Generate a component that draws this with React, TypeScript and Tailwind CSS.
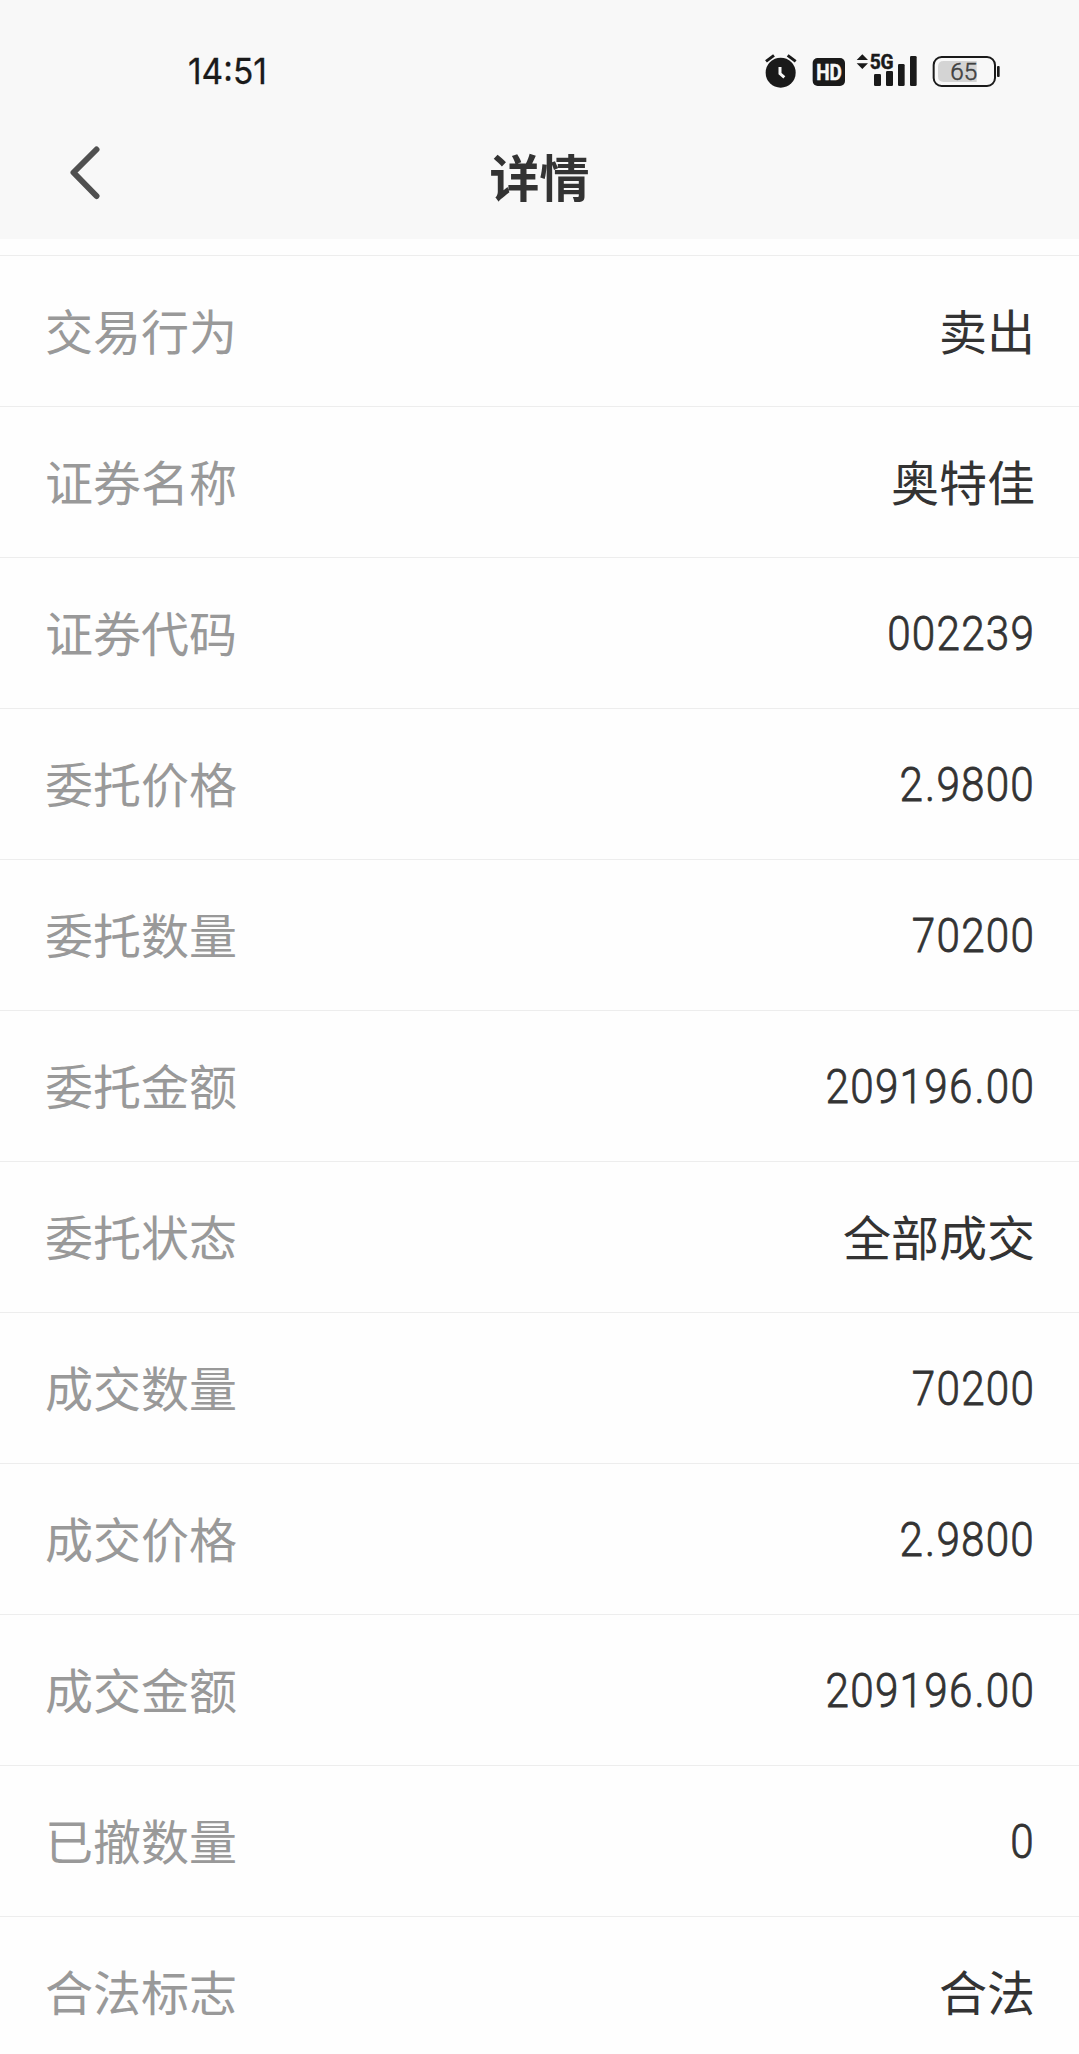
const rows = [
  { label: "交易行为", value: "卖出" },
  { label: "证券名称", value: "奥特佳" },
  { label: "证券代码", value: "002239", numeric: true },
  { label: "委托价格", value: "2.9800", numeric: true },
  { label: "委托数量", value: "70200", numeric: true },
  { label: "委托金额", value: "209196.00", numeric: true },
  { label: "委托状态", value: "全部成交" },
  { label: "成交数量", value: "70200", numeric: true },
  { label: "成交价格", value: "2.9800", numeric: true },
  { label: "成交金额", value: "209196.00", numeric: true },
  { label: "已撤数量", value: "0", numeric: true },
  { label: "合法标志", value: "合法" },
];

function AlarmIcon() {
  return (
    <svg viewBox="75 42 96 102" className="h-[34px] w-[32px]">
      <circle cx="122" cy="98" r="45" fill="#1a1a1a" />
      <path d="M78 64 L102 46 M143 46 L167 64" stroke="#1a1a1a" strokeWidth="9" fill="none" />
      <path d="M120 81 V101 L133 112" stroke="#f8f8f8" strokeWidth="9" fill="none" />
    </svg>
  );
}

function HdIcon() {
  return (
    <svg viewBox="216 42 102 102" className="ml-[15px] h-[34px] w-[34px]">
      <rect x="218" y="54" width="97" height="84" rx="15" fill="#1a1a1a" />
      <text
        x="267"
        y="120"
        fill="#f8f8f8"
        stroke="#f8f8f8"
        strokeWidth="1.5"
        fontSize="66"
        fontWeight="700"
        textAnchor="middle"
        textLength="77"
        lengthAdjust="spacingAndGlyphs"
        fontFamily="Roboto, sans-serif"
      >
        HD
      </text>
    </svg>
  );
}

function SignalIcon() {
  return (
    <svg viewBox="348 42 186 102" className="ml-[10px] h-[34px] w-[62px] overflow-visible">
      <path d="M350 60 L367 43 L384 60 Z M350 70 H384 L367 87 Z" fill="#1a1a1a" />
      <g fill="#1a1a1a">
        <rect x="402" y="102" width="21" height="36" rx="4" />
        <rect x="438" y="93" width="21" height="45" rx="4" />
        <rect x="474" y="72" width="20" height="66" rx="4" />
        <rect x="510" y="48" width="20" height="90" rx="4" />
      </g>
      <text
        x="389"
        y="87"
        fill="#1a1a1a"
        stroke="#1a1a1a"
        strokeWidth="1.5"
        fontSize="62"
        fontWeight="700"
        textLength="72"
        lengthAdjust="spacingAndGlyphs"
        fontFamily="Roboto, sans-serif"
      >
        5G
      </text>
    </svg>
  );
}

function BatteryIcon() {
  return (
    <svg viewBox="576 42 207 102" className="ml-[14px] h-[34px] w-[69px]">
      <rect x="581" y="51" width="184" height="87" rx="24" fill="none" stroke="#1a1a1a" strokeWidth="6" />
      <path d="M710 63 H611 Q594 63 594 80 V109 Q594 126 611 126 H710 Z" fill="#d4d4d4" />
      <rect x="771" y="78" width="8" height="33" rx="3" fill="#1a1a1a" />
      <text
        x="671"
        y="121"
        fill="#404040"
        stroke="#404040"
        strokeWidth="1.5"
        fontSize="73"
        fontWeight="300"
        textAnchor="middle"
        fontFamily="Roboto, sans-serif"
      >
        65
      </text>
    </svg>
  );
}

function Amount({ value }: { value: string }) {
  const [whole, fraction] = value.split(".");

  return (
    <dd className="mt-[5px] origin-right scale-x-[0.88] font-['Roboto',sans-serif] font-light tracking-[1.4px] text-[#333333] [-webkit-text-stroke:0.8px_#333333]">
      {whole}
      {fraction && <span className="pl-px">.</span>}
      {fraction}
    </dd>
  );
}

export default function App() {
  return (
    <div className="h-[2054px] w-[1079px] overflow-hidden bg-[#fefefe] font-['Noto_Sans_CJK_SC',sans-serif]">
      <header className="h-[239px] bg-[#f8f8f8] pt-[54px]">
        <div className="flex h-[34px] items-center justify-between pr-[78px] pl-[188px]">
          <span className="origin-left scale-x-[0.93] font-['Inter',sans-serif] text-[36px] leading-[34px] text-[#1a1a1a] [-webkit-text-stroke:0.3px_#1a1a1a]">
            14:51
          </span>
          <div className="flex items-center">
            <AlarmIcon />
            <HdIcon />
            <SignalIcon />
            <BatteryIcon />
          </div>
        </div>

        <div className="mt-[48px] grid grid-cols-[1fr_auto_1fr] items-center">
          <button aria-label="返回" className="ml-[68px] w-[34px]">
            <svg viewBox="0 0 34 56" className="h-[56px] w-[34px]">
              <path
                d="M28.5 5.5 L5.5 28.5 L28.5 52"
                fill="none"
                stroke="#505050"
                strokeWidth="6"
                strokeLinecap="round"
                strokeLinejoin="round"
              />
            </svg>
          </button>
          <h1 className="pt-[3px] text-[50px] leading-[69px] font-bold text-[#333333]">
            <span className="inline-block translate-y-[2px]">详情</span>
          </h1>
        </div>
      </header>

      <dl className="pt-[16px]">
        {rows.map((row) => (
          <div
            key={row.label}
            className="flex h-[151px] items-center justify-between border-t border-[#ededed] pr-[44px] pb-[4px] pl-[45px] text-[48px] leading-[72px]"
          >
            <dt className="text-[#999999]">{row.label}</dt>
            {row.numeric ? (
              <Amount value={row.value} />
            ) : (
              <dd className="text-[#333333]">{row.value}</dd>
            )}
          </div>
        ))}
      </dl>
    </div>
  );
}
